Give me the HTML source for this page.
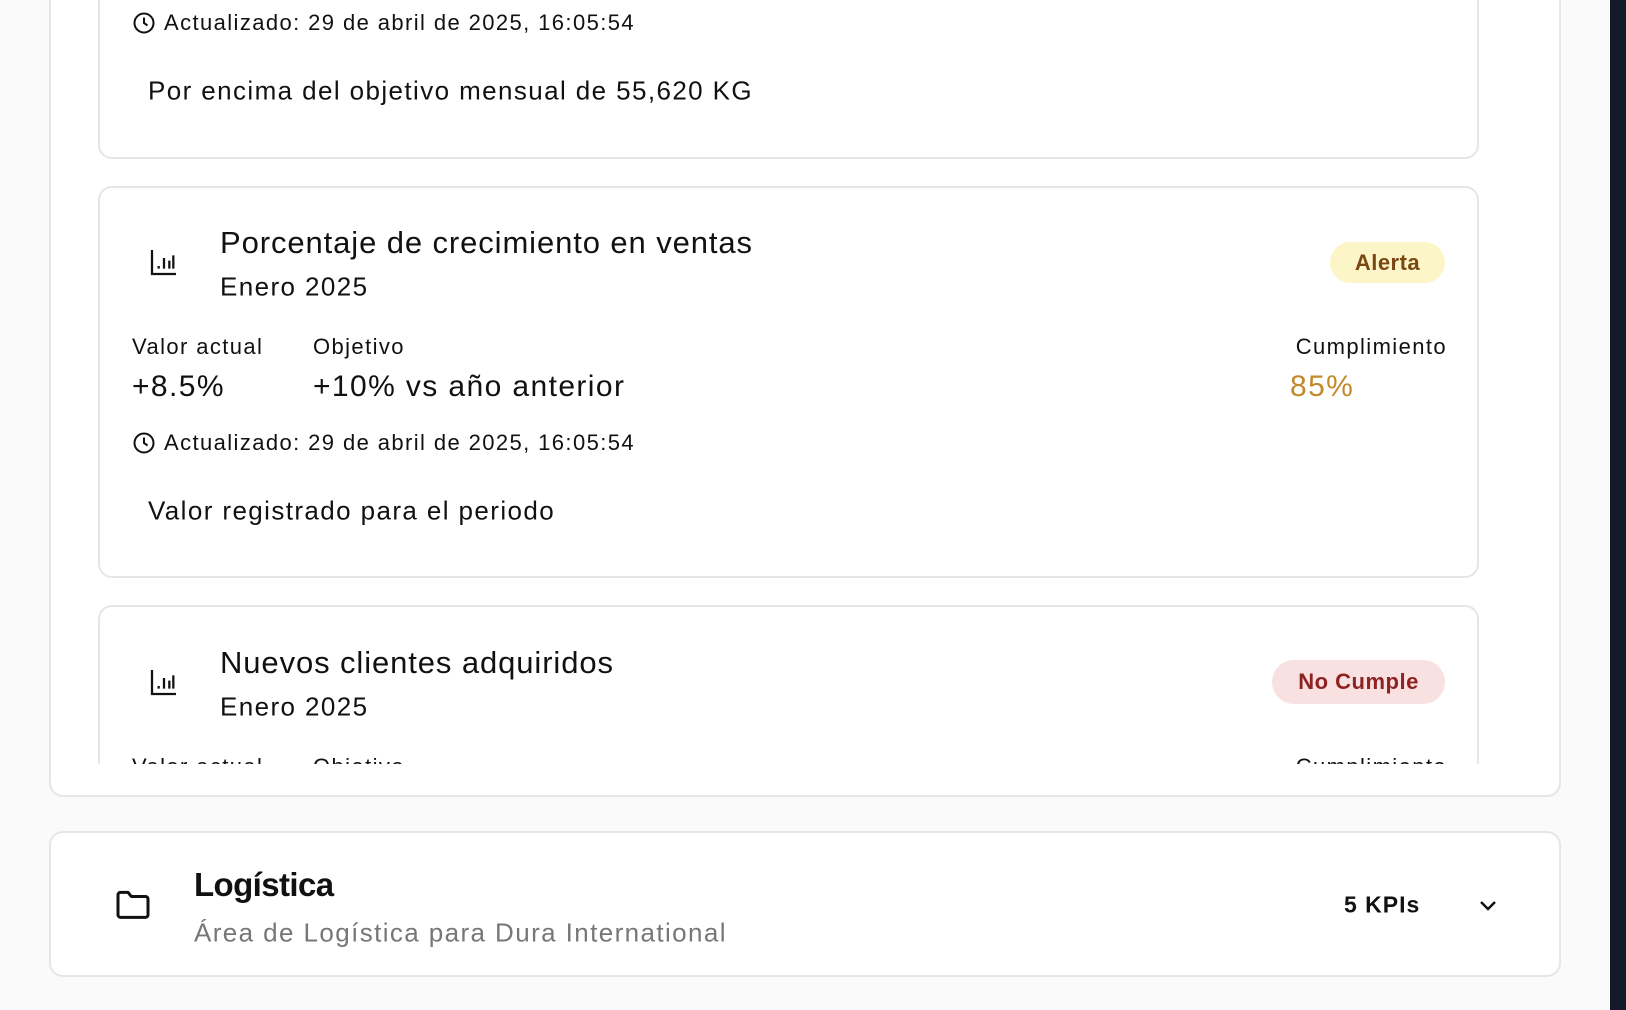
<!DOCTYPE html>
<html><head><meta charset="utf-8"><style>
*{box-sizing:border-box;margin:0;padding:0}
body{width:1626px;height:1010px;overflow:hidden;background:#fafafa;font-family:"Liberation Sans",sans-serif;color:#111;position:relative}
.abs{position:absolute;white-space:nowrap;letter-spacing:1.4px}
.outer{position:absolute;left:49px;top:-40px;width:1512px;height:837px;background:#fff;border:2px solid #e6e6e6;border-radius:14px}
.clip{position:absolute;left:0;top:0;width:1626px;height:764px;overflow:hidden}
.card{position:absolute;left:98px;width:1381px;height:392px;background:#fff;border:2px solid #e6e6e6;border-radius:14px}
.t{transform:translateY(-50%)}
.tt{letter-spacing:0.9px}
.badge{position:absolute;border-radius:22px;font-weight:bold;font-size:22px;display:flex;align-items:center;justify-content:center;letter-spacing:0.5px}
.side{position:absolute;left:1610px;top:0;width:16px;height:1010px;background:#131a2a}
</style></head><body>
<div class="outer"></div>
<div class="clip">
<!-- card1 -->
<div class="card" style="top:-233px"></div>
<svg class="abs" style="left:132px;top:11px" width="24" height="24" viewBox="0 0 24 24" fill="none" stroke="#111" stroke-width="2"><circle cx="12" cy="12" r="9.5"/><path d="M12 6.5V12l3.5 2.5"/></svg>
<div class="abs t" style="left:164px;top:23px;font-size:22px">Actualizado: 29 de abril de 2025, 16:05:54</div>
<div class="abs t" style="left:148px;top:91px;font-size:26px">Por encima del objetivo mensual de 55,620 KG</div>

<!-- card2 -->
<div class="card" style="top:186px"></div>
<svg class="abs" style="left:148px;top:246px" width="32" height="32" viewBox="0 0 24 24" fill="none" stroke="#111" stroke-width="1.7"><path d="M3 3v18h18M8 17v-2M12 17V9M16 17v-6M19 17V7"/></svg>
<div class="abs t tt" style="left:220px;top:243px;font-size:31px">Porcentaje de crecimiento en ventas</div>
<div class="abs t" style="left:220px;top:287px;font-size:26px">Enero 2025</div>
<div class="badge" style="left:1330px;top:242px;width:115px;height:41px;background:#fcf5c7;color:#7a4712">Alerta</div>
<div class="abs t" style="left:132px;top:347px;font-size:22px">Valor actual</div>
<div class="abs t" style="left:313px;top:347px;font-size:22px">Objetivo</div>
<div class="abs t" style="right:179px;top:347px;font-size:22px">Cumplimiento</div>
<div class="abs t" style="left:132px;top:387px;font-size:30px">+8.5%</div>
<div class="abs t" style="left:313px;top:387px;font-size:30px">+10% vs año anterior</div>
<div class="abs t" style="left:1290px;top:387px;font-size:30px;color:#c38a2c">85%</div>
<svg class="abs" style="left:132px;top:431px" width="24" height="24" viewBox="0 0 24 24" fill="none" stroke="#111" stroke-width="2"><circle cx="12" cy="12" r="9.5"/><path d="M12 6.5V12l3.5 2.5"/></svg>
<div class="abs t" style="left:164px;top:443px;font-size:22px">Actualizado: 29 de abril de 2025, 16:05:54</div>
<div class="abs t" style="left:148px;top:511px;font-size:26px">Valor registrado para el periodo</div>

<!-- card3 -->
<div class="card" style="top:605px"></div>
<svg class="abs" style="left:148px;top:666px" width="32" height="32" viewBox="0 0 24 24" fill="none" stroke="#111" stroke-width="1.7"><path d="M3 3v18h18M8 17v-2M12 17V9M16 17v-6M19 17V7"/></svg>
<div class="abs t tt" style="left:220px;top:663px;font-size:31px">Nuevos clientes adquiridos</div>
<div class="abs t" style="left:220px;top:707px;font-size:26px">Enero 2025</div>
<div class="badge" style="left:1272px;top:660px;width:173px;height:44px;background:#f9e1e1;color:#8f2323">No Cumple</div>
<div class="abs t" style="left:132px;top:767px;font-size:22px">Valor actual</div>
<div class="abs t" style="left:313px;top:767px;font-size:22px">Objetivo</div>
<div class="abs t" style="right:179px;top:767px;font-size:22px">Cumplimiento</div>
</div>

<!-- Logistica -->
<div style="position:absolute;left:49px;top:831px;width:1512px;height:146px;background:#fff;border:2px solid #e6e6e6;border-radius:14px"></div>
<svg class="abs" style="left:113px;top:884px" width="40" height="40" viewBox="0 0 24 24" fill="none" stroke="#111" stroke-width="1.8" stroke-linejoin="round"><path d="M3 6.5a1.5 1.5 0 0 1 1.5-1.5H9l2 2.5h8.5A1.5 1.5 0 0 1 21 9v9.5a1.5 1.5 0 0 1-1.5 1.5h-15A1.5 1.5 0 0 1 3 18.5z"/></svg>
<div class="abs t" style="left:194px;top:885px;font-size:33px;font-weight:bold;letter-spacing:-0.6px">Logística</div>
<div class="abs t" style="left:194px;top:933px;font-size:26px;color:#777">Área de Logística para Dura International</div>
<div class="abs t" style="left:1344px;top:905px;font-size:23px;font-weight:bold;letter-spacing:1px">5 KPIs</div>
<svg class="abs" style="left:1476px;top:893px" width="24" height="24" viewBox="0 0 24 24" fill="none" stroke="#111" stroke-width="2.5"><path d="M5 9l7 7 7-7"/></svg>
<div class="side"></div>
</body></html>
